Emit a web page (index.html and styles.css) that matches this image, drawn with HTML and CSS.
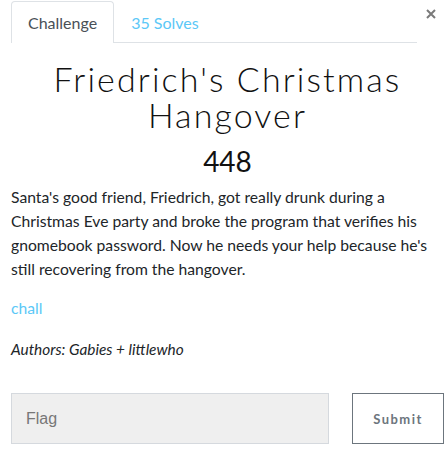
FILE: index.html
```html
<!DOCTYPE html>
<html>
<head>
<meta charset="utf-8">
<link rel="stylesheet" href="styles.css">
</head>
<body>
<div class="modal">
  <div class="header">
    <ul class="tabs">
      <li class="tab active">Challenge</li>
      <li class="tab link">35 Solves</li>
    </ul>
    <svg class="close" width="10" height="10" viewBox="0 0 10 10"><path d="M1 1L9 9M9 1L1 9" stroke="#7a7a7a" stroke-width="2"/></svg>
  </div>
  <h2 class="name">Friedrich's Christmas Hangover</h2>
  <h3 class="value">448</h3>
  <p class="desc">Santa's good friend, Friedrich, got really drunk during a Christmas Eve party and broke the program that verifies his gnomebook password. Now he needs your help because he's still recovering from the hangover.</p>
  <p class="files"><a class="file">chall</a></p>
  <p class="authors">Authors: Gabies + littlewho</p>
  <form class="flag-row">
    <input class="flag" type="text" placeholder="Flag">
    <button class="submit" type="button">Submit</button>
  </form>
</div>
</body>
</html>
```
FILE: styles.css
```css
html, body { margin: 0; padding: 0; background: #fff; }
body { font-family: Lato, "Liberation Sans", sans-serif; color: #212529; font-size: 16px; }
.modal { padding: 1px 4px 0 11px; }
.header { display: flex; align-items: flex-start; }
.tabs { list-style: none; margin: 0; padding: 0; display: flex; flex: 1; border-bottom: 1px solid #dee2e6; margin-right: 9px; }
.tab { padding: 0 16px; height: 41px; line-height: 41px; font-size: 16px; border: 1px solid transparent; border-bottom: none; border-radius: 4px 4px 0 0; margin-bottom: -1px; }
.tab.active { color: #495057; border-color: #dee2e6; background: #fff; }
.tab.link { color: #5bc8f7; }
.close { margin-top: 8px; margin-right: 8px; flex: none; }
.name { font-family: "Lato", sans-serif; font-weight: 300; font-size: 34px; letter-spacing: 2.1px; line-height: 36px; text-align: center; margin: 18px 0 0; color: #111; }
.value { font-size: 28px; font-weight: 400; text-align: center; margin: 11px 0 0; line-height: 34px; color: #111; }
.desc { margin: 7px 0 0; line-height: 24px; font-size: 15.7px; padding-right: 8px; }
.files { margin: 15px 0 0; line-height: 24px; font-size: 15.7px; }
.file { color: #5bc8f7; }
.authors { font-style: italic; margin: 17px 0 0; line-height: 24px; font-size: 15.4px; }
.flag-row { display: flex; margin-top: 32px; gap: 23px; }
.flag { width: 318px; height: 51px; box-sizing: border-box; background: #efefef; border: 1px solid #d5d9de; padding: 0 14px; font-family: "Liberation Sans", Arial, sans-serif; font-size: 16px; color: #555; }
.flag::placeholder { color: #777; }
.submit { width: 92px; height: 51px; background: #fff; border: 1px solid #6c757d; color: #6c757d; font-family: Lato, sans-serif; font-weight: bold; font-size: 13px; letter-spacing: 1.5px; }
```
